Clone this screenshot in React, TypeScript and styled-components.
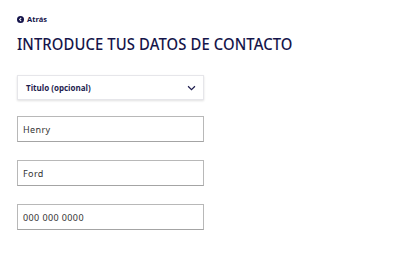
import React from "react";
import styled, { createGlobalStyle } from "styled-components";

const Global = createGlobalStyle`
  html, body { margin: 0; padding: 0; background: #fff; }
  body { font-family: "Open Sans", "Liberation Sans", sans-serif; }
  * { box-sizing: border-box; }
`;

const Page = styled.div`
  width: 411px;
  height: 260px;
  padding: 14px 17px 0 17px;
  display: flex;
  flex-direction: column;
`;

const Back = styled.a`
  display: flex;
  align-items: center;
  gap: 3px;
  font-size: 7.5px;
  font-weight: 700;
  color: #14134a;
  height: 10px;
  text-decoration: none;
`;

const Title = styled.h1`
  margin: 10px 0 0 0;
  font-family: "Noto Sans", "Liberation Sans", sans-serif;
  font-weight: 500;
  font-size: 16px;
  line-height: 20px;
  letter-spacing: 0.1px;
  color: #15154a;
  transform: scaleX(0.927);
  transform-origin: left;
  white-space: nowrap;
`;

const Form = styled.div`
  margin-top: 21px;
  display: flex;
  flex-direction: column;
  gap: 18px;
  width: 187px;
`;

const Select = styled.div`
  height: 25px;
  margin-bottom: -2px;
  display: flex;
  align-items: center;
  justify-content: space-between;
  padding: 0 7px 0 8px;
  border: 1px solid #e6e6ea;
  box-shadow: 0 1px 2px rgba(0, 0, 0, 0.12);
  font-size: 8px;
  font-weight: 700;
  color: #1d1c4e;
`;

const Input = styled.div`
  height: 26px;
  display: flex;
  align-items: center;
  padding: 0 5px;
  border: 1px solid #b8b8b8;
  border-bottom-color: #a4a4a4;
  font-family: "Noto Sans", "Liberation Sans", sans-serif;
  font-size: 9px;
  color: #333;
  letter-spacing: 0.4px;
`;

export default function App() {
  return (
    <>
      <Global />
      <Page>
        <Back>
          <svg width="7" height="7" viewBox="0 0 10 10">
            <circle cx="5" cy="5" r="5" fill="#14134a" />
            <path d="M6 2.8 L3.8 5 L6 7.2" stroke="#fff" strokeWidth="1.5" fill="none" />
          </svg>
          Atrás
        </Back>
        <Title>INTRODUCE TUS DATOS DE CONTACTO</Title>
        <Form>
          <Select>
            <span>Titulo (opcional)</span>
            <svg width="9" height="6" viewBox="0 0 10 7">
              <path d="M1 1.5 L5 5.5 L9 1.5" stroke="#1d1c4e" strokeWidth="1.4" fill="none" />
            </svg>
          </Select>
          <Input>Henry</Input>
          <Input>Ford</Input>
          <Input>000 000 0000</Input>
        </Form>
      </Page>
    </>
  );
}
